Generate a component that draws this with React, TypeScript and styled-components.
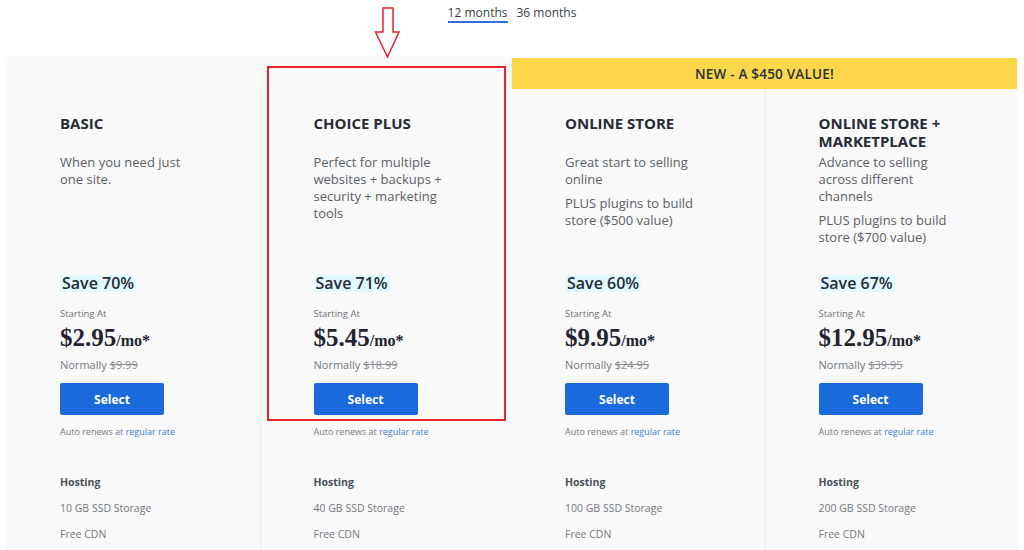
import React from 'react'
import styled, { createGlobalStyle } from 'styled-components'

const GlobalStyle = createGlobalStyle`
  body {
    margin: 0;
    background: #ffffff;
    font-family: 'Open Sans', 'Liberation Sans', sans-serif;
    color: #2a2f3a;
  }
`

interface Plan {
  name: string[]
  desc: string[]
  save: string
  price: string
  normally: string
  storage: string
}

const plans: Plan[] = [
  {
    name: ['BASIC'],
    desc: ['When you need just one site.'],
    save: 'Save 70%',
    price: '$2.95',
    normally: '$9.99',
    storage: '10 GB SSD Storage',
  },
  {
    name: ['CHOICE PLUS'],
    desc: ['Perfect for multiple websites + backups + security + marketing tools'],
    save: 'Save 71%',
    price: '$5.45',
    normally: '$18.99',
    storage: '40 GB SSD Storage',
  },
  {
    name: ['ONLINE STORE'],
    desc: ['Great start to selling online', 'PLUS plugins to build store ($500 value)'],
    save: 'Save 60%',
    price: '$9.95',
    normally: '$24.95',
    storage: '100 GB SSD Storage',
  },
  {
    name: ['ONLINE STORE +', 'MARKETPLACE'],
    desc: ['Advance to selling across different channels', 'PLUS plugins to build store ($700 value)'],
    save: 'Save 67%',
    price: '$12.95',
    normally: '$39.95',
    storage: '200 GB SSD Storage',
  },
]

const Page = styled.div`
  position: relative;
  width: 1024px;
  height: 550px;
  overflow: hidden;
`

const TermBar = styled.div`
  height: 58px;
  display: flex;
  justify-content: center;
  gap: 9px;
  padding-top: 5px;
  box-sizing: border-box;
`

const Term = styled.span<{ $active?: boolean }>`
  font-size: 12px;
  line-height: 15px;
  height: 15px;
  color: #3a3f48;
  padding-bottom: 1px;
  border-bottom: 2px solid ${({ $active }) => ($active ? '#2f6fd8' : 'transparent')};
`

const Arrow = styled.svg`
  position: absolute;
  left: 374px;
  top: 6px;
`

const Plans = styled.div`
  display: flex;
  margin-left: 7px;
  width: 1010px;
`

const Group = styled.div`
  flex: 1;
  display: flex;
  flex-direction: column;
  box-shadow: 0 0 3px rgba(0, 0, 0, 0.08);
`

const Banner = styled.div<{ $blank?: boolean }>`
  height: 31px;
  display: flex;
  align-items: center;
  justify-content: center;
  background: ${({ $blank }) => ($blank ? '#f9f9f9' : '#fcd74a')};
  font-size: 13.5px;
  font-weight: 600;
  color: #2a2f3a;
  letter-spacing: 0.2px;
`

const Cards = styled.div`
  display: grid;
  grid-template-columns: 1fr 1fr;
  flex: 1;
`

const Card = styled.div`
  position: relative;
  background: #f9f9f9;
  padding: 25px 20px 0 53px;
  height: 470px;
  box-sizing: border-box;
  border-left: 1px solid #ececec;

  &:first-child {
    border-left: none;
  }
`

const Highlight = styled.div`
  position: absolute;
  left: 6px;
  top: -23px;
  width: 239px;
  height: 355px;
  border: 2px solid #e8212b;
  box-sizing: border-box;
  pointer-events: none;
`

const Title = styled.div`
  font-size: 15px;
  line-height: 18px;
  font-weight: 700;
  color: #252b38;
  min-height: 36px;
  margin-bottom: 4px;
`

const Desc = styled.div`
  height: 121px;
  width: 142px;
`

const DescLine = styled.p`
  margin: 0 0 7px;
  font-size: 13px;
  line-height: 17px;
  color: #5b5f66;
`

const Save = styled.div`
  width: fit-content;
  background: #e2f9fd;
  padding: 0 2px;
  font-size: 16px;
  line-height: 17px;
  font-weight: 600;
  color: #252b38;
`

const Starting = styled.div`
  margin-top: 16px;
  font-size: 9.5px;
  line-height: 12px;
  color: #6b6f76;
`

const Price = styled.div`
  margin-top: 4px;
  font-family: 'Liberation Serif', serif;
  font-weight: 700;
  font-size: 25px;
  line-height: 28px;
  color: #1f2430;
`

const Per = styled.span`
  font-size: 16px;
`

const Normally = styled.div`
  margin-top: 3px;
  font-size: 11px;
  line-height: 14px;
  color: #74787e;

  s {
    color: #8a8d92;
  }
`

const SelectButton = styled.button`
  margin-top: 11px;
  display: block;
  width: 104px;
  height: 32px;
  border: none;
  border-radius: 2px;
  background: #1a6ade;
  color: #ffffff;
  font-family: inherit;
  font-size: 12px;
  font-weight: 700;
`

const Renew = styled.div`
  margin-top: 11px;
  font-size: 9px;
  line-height: 12px;
  color: #74787e;

  a {
    color: #3f7bd6;
    text-decoration: none;
  }
`

const FeatureHead = styled.div`
  margin-top: 37px;
  font-size: 10.5px;
  line-height: 14px;
  font-weight: 700;
  color: #4a505a;
`

const Feature = styled.div`
  margin-top: 12px;
  font-size: 10.5px;
  line-height: 14px;
  color: #74787e;
`

const PlanCard: React.FC<{ plan: Plan; marked?: boolean }> = ({ plan, marked }) => (
  <Card>
    {marked && <Highlight />}
    <Title>
      {plan.name.map((n) => (
        <div key={n}>{n}</div>
      ))}
    </Title>
    <Desc>
      {plan.desc.map((d) => (
        <DescLine key={d}>{d}</DescLine>
      ))}
    </Desc>
    <Save>{plan.save}</Save>
    <Starting>Starting At</Starting>
    <Price>
      {plan.price}
      <Per>/mo*</Per>
    </Price>
    <Normally>
      Normally <s>{plan.normally}</s>
    </Normally>
    <SelectButton>Select</SelectButton>
    <Renew>
      Auto renews at <a href="#">regular rate</a>
    </Renew>
    <FeatureHead>Hosting</FeatureHead>
    <Feature>{plan.storage}</Feature>
    <Feature>Free CDN</Feature>
  </Card>
)

const App: React.FC = () => (
  <Page>
    <GlobalStyle />
    <TermBar>
      <Term $active>12 months</Term>
      <Term>36 months</Term>
    </TermBar>
    <Arrow width="27" height="53" viewBox="0 0 27 53">
      <polygon points="9,2 19,2 19,26 25,26 13.5,51 1.5,26 9,26" fill="none" stroke="#e8212b" strokeWidth="1.5" />
    </Arrow>
    <Plans>
      <Group>
        <Banner $blank />
        <Cards>
          <PlanCard plan={plans[0]} />
          <PlanCard plan={plans[1]} marked />
        </Cards>
      </Group>
      <Group>
        <Banner>NEW - A $450 VALUE!</Banner>
        <Cards>
          <PlanCard plan={plans[2]} />
          <PlanCard plan={plans[3]} />
        </Cards>
      </Group>
    </Plans>
  </Page>
)

export default App
